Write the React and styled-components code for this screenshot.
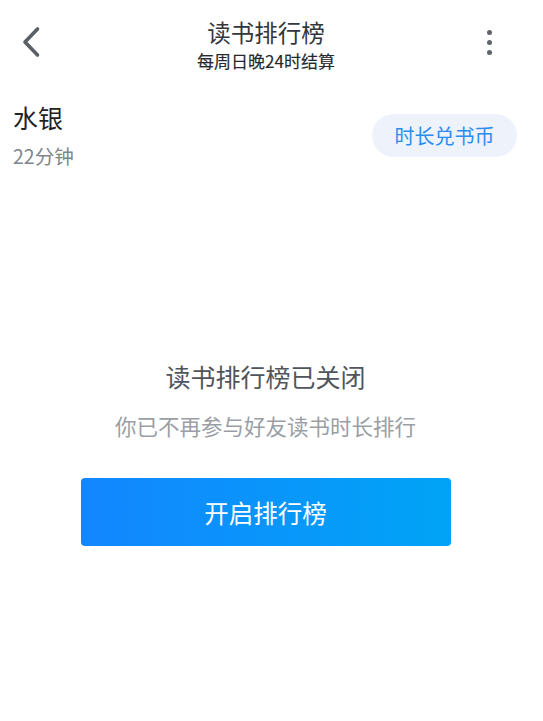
import React from "react";
import styled, { createGlobalStyle } from "styled-components";

const Global = createGlobalStyle`
  html, body { margin: 0; padding: 0; background: #fff; }
  body { font-family: "Noto Sans CJK SC", "Noto Sans", sans-serif; }
  * { box-sizing: border-box; }
`;

const Page = styled.div`
  width: 543px;
  min-height: 721px;
  background: #fff;
  display: flex;
  flex-direction: column;
`;

const Header = styled.header`
  display: grid;
  grid-template-columns: 60px 1fr 71px;
  align-items: center;
  height: 84px;
`;

const BackBtn = styled.button`
  border: 0;
  background: none;
  padding: 0 0 0 21px;
  height: 40px;
  display: flex;
  align-items: center;
  cursor: pointer;
`;

const TitleBox = styled.div`
  display: flex;
  flex-direction: column;
  align-items: center;
  gap: 6px;
  padding-top: 5px;
`;

const Title = styled.div`
  font-size: 23.5px;
  line-height: 26px;
  color: #33373d;
`;

const Subtitle = styled.div`
  font-size: 17px;
  line-height: 20px;
  font-weight: 400;
  color: #25292e;
  -webkit-text-stroke: 0.15px #25292e;
`;

const MoreBtn = styled.button`
  border: 0;
  background: none;
  padding: 0 0 0 15px;
  display: flex;
  flex-direction: column;
  gap: 5px;
  align-items: flex-start;
  cursor: pointer;
`;

const Dot = styled.span`
  width: 5px;
  height: 5px;
  border-radius: 50%;
  background: #5f636a;
`;

const Profile = styled.section`
  display: flex;
  justify-content: space-between;
  align-items: flex-start;
  padding: 18px 26px 0 13px;
`;

const UserInfo = styled.div`
  display: flex;
  flex-direction: column;
  gap: 12px;
`;

const Name = styled.div`
  font-size: 25px;
  line-height: 30px;
  color: #1f2226;
`;

const Duration = styled.div`
  font-size: 19.5px;
  line-height: 24px;
  color: #80858c;
`;

const Pill = styled.button`
  margin-top: 12px;
  width: 145px;
  height: 43px;
  border: 0;
  border-radius: 22px;
  background: #edf2fb;
  color: #2d8cf0;
  font-family: inherit;
  font-size: 20px;
  display: flex;
  align-items: center;
  justify-content: center;
  cursor: pointer;
`;

const Empty = styled.section`
  display: flex;
  flex-direction: column;
  align-items: center;
  padding: 192px 12px 0 0;
`;

const EmptyTitle = styled.div`
  font-size: 25px;
  line-height: 32px;
  color: #50555c;
`;

const EmptyText = styled.div`
  margin-top: 19px;
  font-size: 21.5px;
  line-height: 30px;
  color: #9a9ea5;
`;

const OpenBtn = styled.button`
  margin-top: 37px;
  width: 370px;
  height: 68px;
  border: 0;
  border-radius: 4px;
  background: linear-gradient(90deg, #1386ff 0%, #00a4f6 100%);
  color: #fff;
  font-family: inherit;
  font-size: 24.5px;
  cursor: pointer;
`;

export default function App() {
  return (
    <Page>
      <Global />
      <Header>
        <BackBtn aria-label="返回">
          <svg width="20" height="32" viewBox="0 0 20 32">
            <path d="M16.5 3 L4 16 L16.5 29" fill="none" stroke="#5a5f66" strokeWidth="3.6" strokeLinecap="round" strokeLinejoin="round" />
          </svg>
        </BackBtn>
        <TitleBox>
          <Title>读书排行榜</Title>
          <Subtitle>每周日晚24时结算</Subtitle>
        </TitleBox>
        <MoreBtn aria-label="更多">
          <Dot />
          <Dot />
          <Dot />
        </MoreBtn>
      </Header>
      <Profile>
        <UserInfo>
          <Name>水银</Name>
          <Duration>22分钟</Duration>
        </UserInfo>
        <Pill>时长兑书币</Pill>
      </Profile>
      <Empty>
        <EmptyTitle>读书排行榜已关闭</EmptyTitle>
        <EmptyText>你已不再参与好友读书时长排行</EmptyText>
        <OpenBtn>开启排行榜</OpenBtn>
      </Empty>
    </Page>
  );
}
